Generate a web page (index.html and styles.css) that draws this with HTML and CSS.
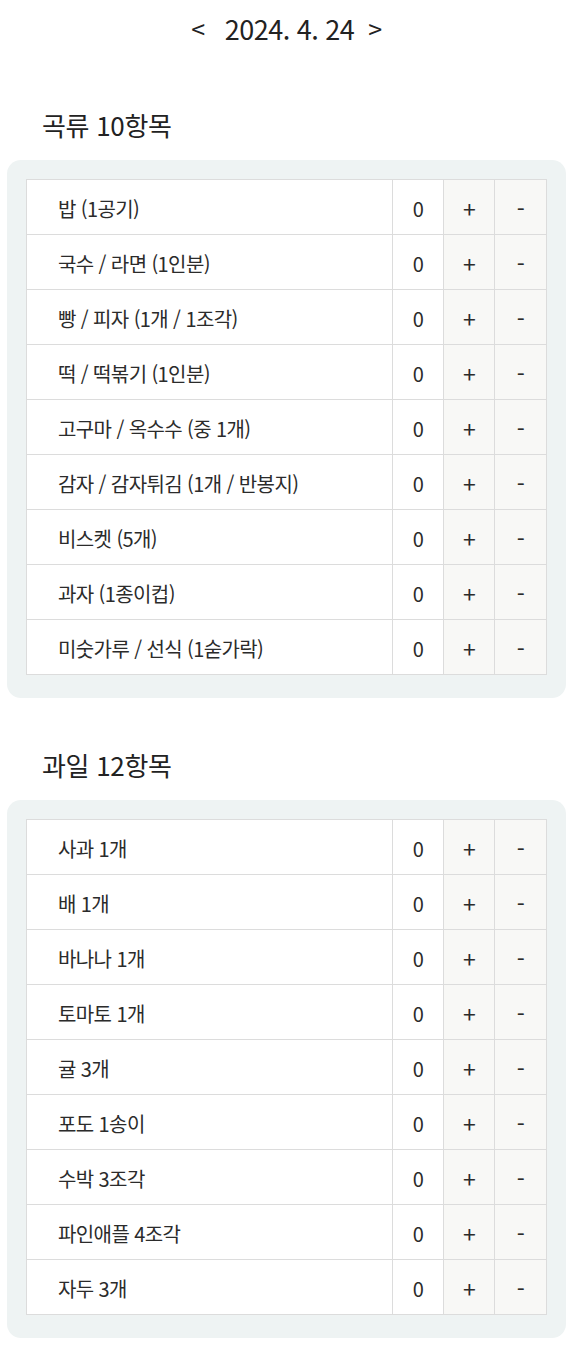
FILE: index.html
```html
<!DOCTYPE html>
<html lang="ko">
<head>
<meta charset="utf-8">
<title>식단 기록</title>
<link rel="stylesheet" href="styles.css">
</head>
<body>
<header class="date-nav">
  <span class="nav-btn prev">&lt;</span>
  <span class="date">2024. 4. 24</span>
  <span class="nav-btn next">&gt;</span>
</header>

<section class="group">
  <h2 class="group-title">곡류 10항목</h2>
  <div class="card">
    <table class="items">
      <tr><td class="name">밥 (1공기)</td><td class="count">0</td><td class="btn">+</td><td class="btn">-</td></tr>
      <tr><td class="name">국수 / 라면 (1인분)</td><td class="count">0</td><td class="btn">+</td><td class="btn">-</td></tr>
      <tr><td class="name">빵 / 피자 (1개 / 1조각)</td><td class="count">0</td><td class="btn">+</td><td class="btn">-</td></tr>
      <tr><td class="name">떡 / 떡볶기 (1인분)</td><td class="count">0</td><td class="btn">+</td><td class="btn">-</td></tr>
      <tr><td class="name">고구마 / 옥수수 (중 1개)</td><td class="count">0</td><td class="btn">+</td><td class="btn">-</td></tr>
      <tr><td class="name">감자 / 감자튀김 (1개 / 반봉지)</td><td class="count">0</td><td class="btn">+</td><td class="btn">-</td></tr>
      <tr><td class="name">비스켓 (5개)</td><td class="count">0</td><td class="btn">+</td><td class="btn">-</td></tr>
      <tr><td class="name">과자 (1종이컵)</td><td class="count">0</td><td class="btn">+</td><td class="btn">-</td></tr>
      <tr><td class="name">미숫가루 / 선식 (1숟가락)</td><td class="count">0</td><td class="btn">+</td><td class="btn">-</td></tr>
    </table>
  </div>
</section>

<section class="group">
  <h2 class="group-title">과일 12항목</h2>
  <div class="card">
    <table class="items">
      <tr><td class="name">사과 1개</td><td class="count">0</td><td class="btn">+</td><td class="btn">-</td></tr>
      <tr><td class="name">배 1개</td><td class="count">0</td><td class="btn">+</td><td class="btn">-</td></tr>
      <tr><td class="name">바나나 1개</td><td class="count">0</td><td class="btn">+</td><td class="btn">-</td></tr>
      <tr><td class="name">토마토 1개</td><td class="count">0</td><td class="btn">+</td><td class="btn">-</td></tr>
      <tr><td class="name">귤 3개</td><td class="count">0</td><td class="btn">+</td><td class="btn">-</td></tr>
      <tr><td class="name">포도 1송이</td><td class="count">0</td><td class="btn">+</td><td class="btn">-</td></tr>
      <tr><td class="name">수박 3조각</td><td class="count">0</td><td class="btn">+</td><td class="btn">-</td></tr>
      <tr><td class="name">파인애플 4조각</td><td class="count">0</td><td class="btn">+</td><td class="btn">-</td></tr>
      <tr><td class="name">자두 3개</td><td class="count">0</td><td class="btn">+</td><td class="btn">-</td></tr>
    </table>
  </div>
</section>
</body>
</html>
```

FILE: styles.css
```css
* { box-sizing: border-box; }

body {
  margin: 0;
  font-family: "Noto Sans CJK KR", sans-serif;
  color: #2b2b2b;
  background: #ffffff;
}

.date-nav {
  height: 56px;
  display: flex;
  align-items: center;
  justify-content: center;
  font-size: 27px;
  line-height: 1;
  letter-spacing: -0.5px;
  color: #222;
}

.nav-btn.prev { margin-right: 20px; font-size: 25px; }
.nav-btn.next { margin-left: 14px; font-size: 25px; }

.group-title {
  margin: 0;
  padding-left: 42px;
  font-size: 26px;
  font-weight: 400;
  line-height: 34px;
  letter-spacing: -0.3px;
  color: #222;
}

.group:first-of-type .group-title { margin-top: 52px; }
.group + .group .group-title { margin-top: 50px; }

.card {
  margin: 18px 7px 0;
  padding: 19px 19px 23px;
  background: #eef3f3;
  border-radius: 14px;
}

.items {
  width: 100%;
  border-collapse: collapse;
  background: #ffffff;
  font-size: 20px;
  letter-spacing: -0.6px;
  color: #2b2b2b;
}

.items td {
  height: 55px;
  padding: 2px 0 0;
  border: 1px solid #dcdcdc;
  vertical-align: middle;
}

.items .name {
  padding-left: 31px;
}

.items .count {
  width: 51px;
  text-align: center;
}

.items .btn {
  width: 51px;
  text-align: center;
  font-size: 23px;
  background: #f8f8f6;
}

.items .btn:last-child { width: 52px; }
```
